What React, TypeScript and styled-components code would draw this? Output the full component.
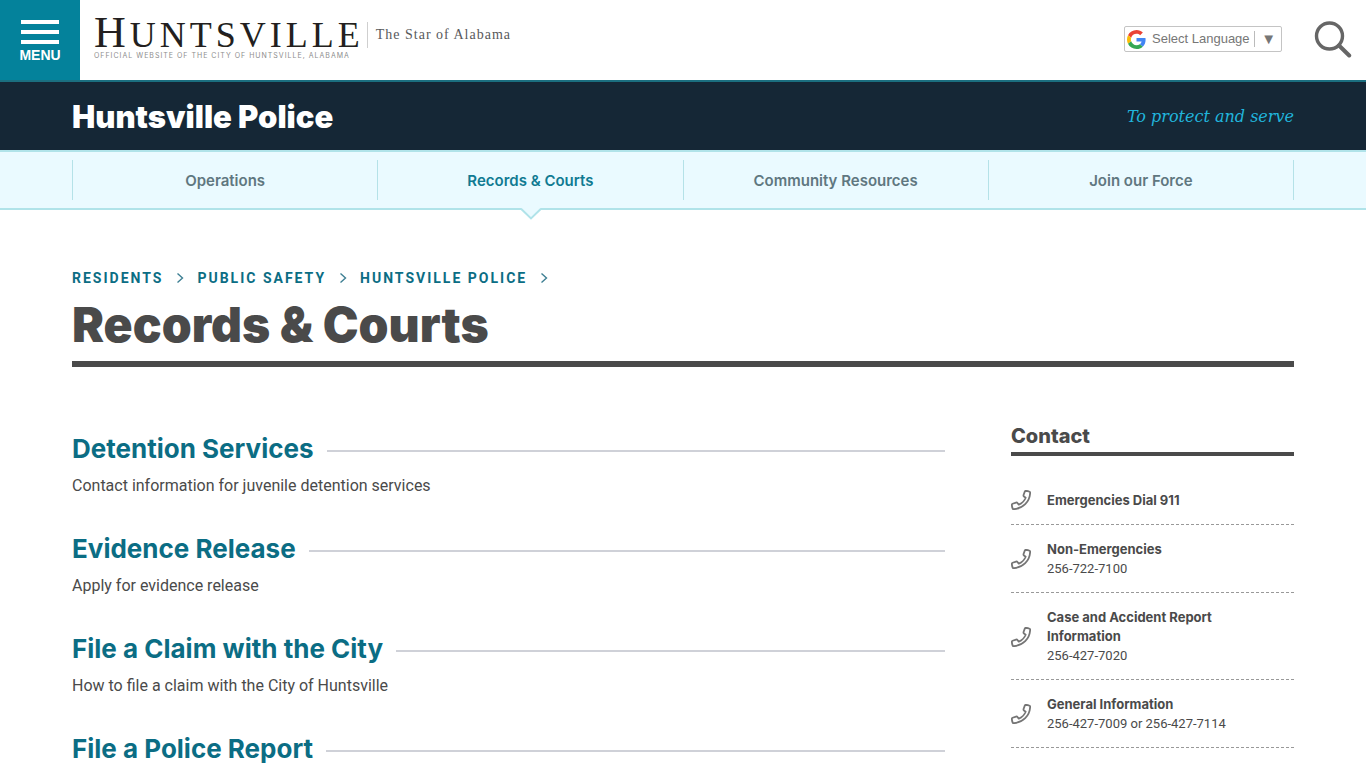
import React from "react";
import styled, { createGlobalStyle } from "styled-components";

const sans = '"Roboto", "Liberation Sans", sans-serif';
const display = '"Inter", "Liberation Sans", sans-serif';
const gutter = "72px";

const GlobalStyle = createGlobalStyle`
  *, *::before, *::after { box-sizing: border-box; }
  html { scrollbar-width: none; }
  body {
    margin: 0;
    background: #fff;
    color: #4a4a4a;
    font-family: ${sans};
    font-size: 16px;
    line-height: 24px;
  }
  a { color: inherit; text-decoration: none; }
  h1, h2, h3, p, ul, ol { margin: 0; padding: 0; }
  ul, ol { list-style: none; }
`;

const Header = styled.header`
  display: flex;
  align-items: center;
  height: 82px;
  border-bottom: 2px solid #1b6f80;
`;

const MenuButton = styled.button`
  display: flex;
  flex-direction: column;
  align-items: center;
  gap: 1px;
  width: 80px;
  height: 80px;
  padding: 20px 0 0;
  border: 0;
  background: #04829b;
  color: #fff;
  font: 700 14px/20px "Liberation Sans", sans-serif;
  cursor: pointer;
`;

const Bars = styled.span`
  display: block;
  width: 38px;
  height: 24px;
  border-top: 4px solid #fff;
  border-bottom: 4px solid #fff;
  padding: 6px 0;

  &::before {
    content: "";
    display: block;
    height: 4px;
    background: #fff;
  }
`;

const Logo = styled.a`
  display: flex;
  align-items: flex-start;
  height: 80px;
  padding: 15px 0 0 14px;
  color: #231f20;
`;

const LogoMain = styled.span`
  display: flex;
  flex-direction: column;
`;

const Wordmark = styled.span`
  font: 36px/36px "Liberation Serif", serif;
  letter-spacing: 4px;
  height: 37px;

  &::first-letter { font-size: 44px; }
`;

const LogoNote = styled.span`
  font: 7px/8px ${display};
  letter-spacing: 1px;
  color: #8d8d8d;
`;

const Star = styled.span`
  margin: 7px 0 0 3px;
  padding-left: 8px;
  border-left: 1px solid #cfcfcf;
  font: 14px/26px "Liberation Serif", serif;
  letter-spacing: 1px;
  color: #58595b;
`;

const Tools = styled.div`
  display: flex;
  align-items: center;
  gap: 32px;
  margin: 0 14px 2px auto;
`;

const Language = styled.label`
  display: flex;
  align-items: center;
  width: 158px;
  height: 26px;
  padding: 0 5px 0 2px;
  border: 1px solid #c4c4c4;
  border-radius: 2px;
  color: #767676;
  font: 13px/16px "Liberation Sans", sans-serif;
`;

const LanguageSelect = styled.select`
  flex: 1;
  min-width: 0;
  margin-left: 6px;
  padding: 0;
  border: 0;
  appearance: none;
  background: none;
  color: #767676;
  font: inherit;
`;

const Arrow = styled.span`
  padding-left: 6px;
  border-left: 1px solid #bbb;
  font-size: 15px;
`;

const SearchButton = styled.button`
  display: flex;
  padding: 0;
  border: 0;
  background: none;
  cursor: pointer;
`;

const Banner = styled.div`
  display: flex;
  align-items: center;
  justify-content: space-between;
  height: 68px;
  padding: 2px ${gutter} 0;
  background: #152736;
`;

const Department = styled.a`
  font: 900 31px/40px ${display};
  color: #fff;
`;

const Motto = styled.em`
  font: italic 16px/24px "DejaVu Serif", serif;
  color: #21b5dc;
`;

const SubNav = styled.nav`
  height: 60px;
  padding: 8px ${gutter};
  border-top: 2px solid #b0e3e9;
  border-bottom: 2px solid #b0e3e9;
  background: #eafaff;
`;

const SubNavList = styled.ul`
  display: grid;
  grid-template-columns: repeat(4, 1fr);
  border-right: 1px solid #b5e2e8;
`;

const SubNavItem = styled.li`
  position: relative;
  border-left: 1px solid #b5e2e8;
`;

const SubNavLink = styled.a<{ $active?: boolean }>`
  display: block;
  padding-top: 2px;
  text-align: center;
  font: 600 15px/38px ${display};
  color: ${(p) => (p.$active ? "#107a92" : "#5f7780")};
`;

const Pointer = styled.svg`
  position: absolute;
  top: 48px;
  left: 50%;
  margin-left: -10px;
`;

const Page = styled.main`
  padding: 56px ${gutter} 0;
`;

const Breadcrumbs = styled.ol`
  display: flex;
  align-items: center;
`;

const Crumb = styled.li`
  display: flex;
  align-items: center;
  gap: 13px;
  margin-right: 13px;
  font: 700 14px/24px ${sans};
  letter-spacing: 2px;
  color: #0b6d84;
`;

const Title = styled.h1`
  padding: 5px 0 6px;
  border-bottom: 6px solid #4a4a4a;
  font: 900 48px/60px ${display};
`;

const Columns = styled.div`
  display: grid;
  grid-template-columns: minmax(0, 1fr) 283px;
  column-gap: 66px;
  padding-top: 56px;
`;

const Entry = styled.article`
  padding: 8px 0 25px;

  &:last-child { padding-bottom: 0; }
`;

const EntryTitle = styled.h2`
  display: flex;
  align-items: center;
  gap: 13px;
  font: 700 26px/36px ${display};
  color: #0b6d84;

  &::after {
    content: "";
    flex: 1;
    height: 2px;
    margin-top: 4px;
    background: #cfd1d8;
  }
`;

const EntryText = styled.p`
  padding-top: 7px;
`;

const ContactTitle = styled.h3`
  padding-top: 1px;
  padding-bottom: 4px;
  border-bottom: 4px solid #4a4a4a;
  font: 800 20px/24px ${display};
`;

const ContactList = styled.ul`
  padding-top: 19px;
`;

const ContactItem = styled.li`
  display: flex;
  align-items: center;
  gap: 16px;
  padding: 15px 0 14px;
  border-bottom: 1px dashed #999;
  font: 13px/19px ${sans};
`;

const ContactBody = styled.div`
  flex: 1;
  padding-right: 48px;
`;

const ContactName = styled.strong`
  display: block;
  font-family: ${display};
  font-weight: 700;
`;

const PhoneIcon = () => (
  <svg width="20" height="20" viewBox="-22 -22 556 556" aria-hidden="true">
    <path
      d="M496 26C455 12 410 2 392 0C375 0 366 8 361 22L327 118C322 134 326 147 339 157L386 193C348 285 284 348 194 386L158 339C148 326 134 322 118 327L22 361C8 366 0 376 1 391C3 423 12 462 25 496C30 508 40 512 54 511C307 499 499 307 511 54C512 40 508 31 496 26Z"
      fill="none"
      stroke="#757575"
      strokeWidth="50"
      strokeLinejoin="round"
    />
  </svg>
);

const GoogleIcon = () => (
  <svg width="19" height="19" viewBox="0 0 48 48" aria-hidden="true">
    <path fill="#EA4335" d="M24 9.5c3.54 0 6.71 1.22 9.21 3.6l6.85-6.85C35.9 2.38 30.47 0 24 0 14.62 0 6.51 5.38 2.56 13.22l7.98 6.19C12.43 13.72 17.74 9.5 24 9.5z" />
    <path fill="#4285F4" d="M46.98 24.55c0-1.57-.15-3.09-.38-4.55H24v9.02h12.94c-.58 2.96-2.26 5.48-4.78 7.18l7.73 6c4.51-4.18 7.09-10.36 7.09-17.65z" />
    <path fill="#FBBC05" d="M10.53 28.59c-.48-1.45-.76-2.99-.76-4.59s.27-3.14.76-4.59l-7.98-6.19C.92 16.46 0 20.12 0 24c0 3.88.92 7.54 2.56 10.78l7.97-6.19z" />
    <path fill="#34A853" d="M24 48c6.48 0 11.93-2.13 15.89-5.81l-7.73-6c-2.15 1.45-4.92 2.3-8.16 2.3-6.26 0-11.57-4.22-13.47-9.91l-7.98 6.19C6.51 42.62 14.62 48 24 48z" />
  </svg>
);

const sections = ["Operations", "Records & Courts", "Community Resources", "Join our Force"];
const crumbs = ["RESIDENTS", "PUBLIC SAFETY", "HUNTSVILLE POLICE"];
const entries = [
  { title: "Detention Services", text: "Contact information for juvenile detention services" },
  { title: "Evidence Release", text: "Apply for evidence release" },
  { title: "File a Claim with the City", text: "How to file a claim with the City of Huntsville" },
  { title: "File a Police Report", text: "" },
];
const contacts = [
  { name: "Emergencies Dial 911", phone: "" },
  { name: "Non-Emergencies", phone: "256-722-7100" },
  { name: "Case and Accident Report Information", phone: "256-427-7020" },
  { name: "General Information", phone: "256-427-7009 or 256-427-7114" },
];

export default function App() {
  return (
    <>
      <GlobalStyle />
      <Header>
        <MenuButton type="button">
          <Bars />
          MENU
        </MenuButton>
        <Logo href="#">
          <LogoMain>
            <Wordmark>HUNTSVILLE</Wordmark>
            <LogoNote>OFFICIAL WEBSITE OF THE CITY OF HUNTSVILLE, ALABAMA</LogoNote>
          </LogoMain>
          <Star>The Star of Alabama</Star>
        </Logo>
        <Tools>
          <Language>
            <GoogleIcon />
            <LanguageSelect aria-label="Language">
              <option>Select Language</option>
            </LanguageSelect>
            <Arrow aria-hidden="true">▼</Arrow>
          </Language>
          <SearchButton type="button" aria-label="Search">
            <svg width="38" height="38" viewBox="0 0 38 38" fill="none" stroke="#666" strokeLinecap="round">
              <circle cx="15.5" cy="16" r="13" strokeWidth="3.4" />
              <path d="M25 25.5l10.2 10" strokeWidth="4" />
            </svg>
          </SearchButton>
        </Tools>
      </Header>
      <Banner>
        <Department href="#">Huntsville Police</Department>
        <Motto>To protect and serve</Motto>
      </Banner>
      <SubNav>
        <SubNavList>
          {sections.map((name) => {
            const active = name === "Records & Courts";
            return (
              <SubNavItem key={name}>
                <SubNavLink href="#" $active={active}>{name}</SubNavLink>
                {active && (
                  <Pointer width="22" height="12" viewBox="0 0 22 12" aria-hidden="true">
                    <path d="M1 0L11 10L21 0Z" fill="#eafaff" />
                    <path d="M1 .8L11 10.4L21 .8" fill="none" stroke="#b0e3e9" strokeWidth="2" />
                  </Pointer>
                )}
              </SubNavItem>
            );
          })}
        </SubNavList>
      </SubNav>
      <Page>
        <Breadcrumbs>
          {crumbs.map((name) => (
            <Crumb key={name}>
              <a href="#">{name}</a>
              <svg width="8" height="12" viewBox="0 0 8 12" fill="none" stroke="#3d7f93" strokeWidth="1.4" aria-hidden="true">
                <path d="M1.5 1.5L6.5 6L1.5 10.5" />
              </svg>
            </Crumb>
          ))}
        </Breadcrumbs>
        <Title>Records &amp; Courts</Title>
        <Columns>
          <section>
            {entries.map((entry) => (
              <Entry key={entry.title}>
                <EntryTitle><a href="#">{entry.title}</a></EntryTitle>
                {entry.text && <EntryText>{entry.text}</EntryText>}
              </Entry>
            ))}
          </section>
          <aside>
            <ContactTitle>Contact</ContactTitle>
            <ContactList>
              {contacts.map((contact) => (
                <ContactItem key={contact.name}>
                  <PhoneIcon />
                  <ContactBody>
                    <ContactName>{contact.name}</ContactName>
                    {contact.phone}
                  </ContactBody>
                </ContactItem>
              ))}
            </ContactList>
          </aside>
        </Columns>
      </Page>
    </>
  );
}
